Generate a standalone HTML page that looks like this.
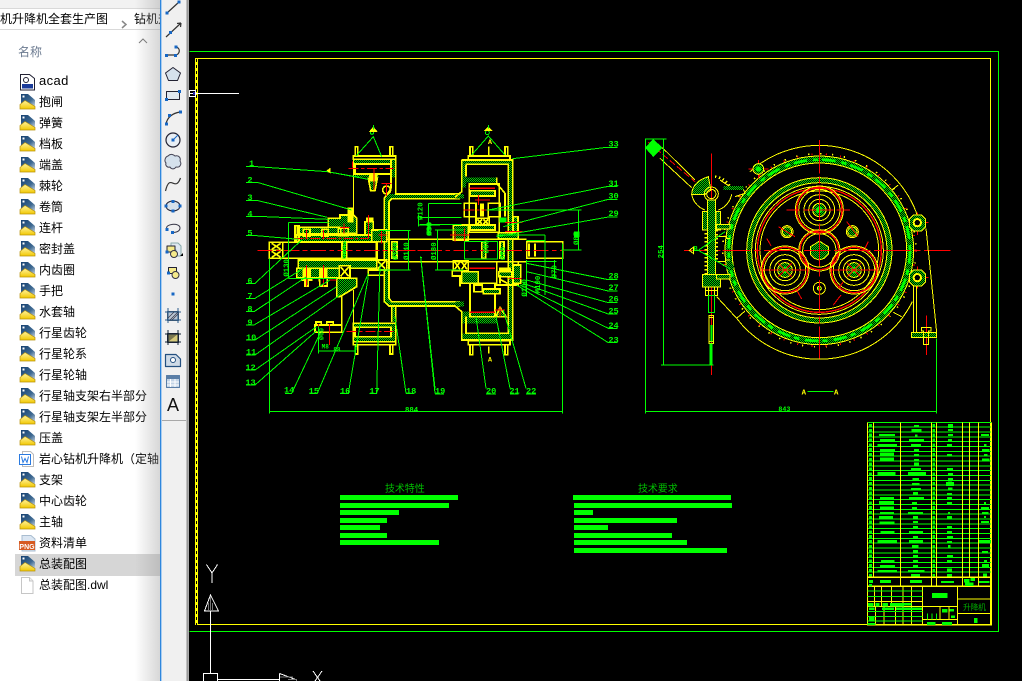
<!DOCTYPE html>
<html><head><meta charset="utf-8">
<style>
html,body{margin:0;padding:0;background:#000}
#w{position:relative;width:1022px;height:681px;overflow:hidden;background:#000;font-family:"Liberation Sans","Noto Sans CJK SC",sans-serif}
#ex{position:absolute;left:0;top:0;width:160px;height:681px;background:#fff;overflow:hidden}
.r{position:absolute;left:39px;font-size:12px;line-height:16px;color:#000;white-space:nowrap}
#sel{position:absolute;left:15px;top:554px;width:145px;height:22px;background:#d6d6d6}
#sh{position:absolute;left:135px;top:0;width:25px;height:681px;background:linear-gradient(90deg,rgba(160,160,160,0),rgba(150,150,150,.38))}
#tb{position:absolute;left:160px;top:0;width:26px;height:681px;background:#f0f0f0;border-left:1px solid #2f86dc;box-shadow:inset 1px 0 0 #a9cdf0;box-sizing:border-box}
#bar{position:absolute;left:186px;top:0;width:3px;height:681px;background:linear-gradient(90deg,#d8d8d8,#8f8f8f 50%,#b8b8b8)}
svg{position:absolute;left:0;top:0}
.y{fill:none;stroke:#ff0;stroke-width:3}
.g{fill:none;stroke:#0f0;stroke-width:3}
.r2{fill:none;stroke:#f00;stroke-width:3}
.h{fill:url(#h);stroke:#ff0;stroke-width:3}
.hg{fill:url(#h);stroke:none}
.t .y,.t .h{stroke-width:5}
.t .y .h{stroke-width:5}
text{font-family:"Liberation Mono",monospace;fill:#0f0;font-weight:bold}
</style></head><body><div id="w">
<div id="ex">
<div style="position:absolute;left:0;top:0;width:160px;height:8px;background:#f2f2f2;border-bottom:1px solid #d9d9d9"></div>
<div style="position:absolute;left:0;top:29px;width:160px;height:1px;background:#d9d9d9"></div>
<div style="position:absolute;left:0;top:11px;font-size:12px;line-height:16px;color:#000;white-space:nowrap">机升降机全套生产图</div>
<div style="position:absolute;left:134px;top:11px;font-size:12px;line-height:16px;color:#000;white-space:nowrap">钻机升</div>
<div style="position:absolute;left:18px;top:44px;font-size:12px;line-height:16px;color:#6b7a90">名称</div>
<div id="sel"></div>
<div class="r" style="top:73px;font-size:13px;letter-spacing:.4px">acad</div>
<div class="r" style="top:94px">抱闸</div>
<div class="r" style="top:115px">弹簧</div>
<div class="r" style="top:136px">档板</div>
<div class="r" style="top:157px">端盖</div>
<div class="r" style="top:178px">棘轮</div>
<div class="r" style="top:199px">卷筒</div>
<div class="r" style="top:220px">连杆</div>
<div class="r" style="top:241px">密封盖</div>
<div class="r" style="top:262px">内齿圈</div>
<div class="r" style="top:283px">手把</div>
<div class="r" style="top:304px">水套轴</div>
<div class="r" style="top:325px">行星齿轮</div>
<div class="r" style="top:346px">行星轮系</div>
<div class="r" style="top:367px">行星轮轴</div>
<div class="r" style="top:388px">行星轴支架右半部分</div>
<div class="r" style="top:409px">行星轴支架左半部分</div>
<div class="r" style="top:430px">压盖</div>
<div class="r" style="top:451px">岩心钻机升降机（定轴</div>
<div class="r" style="top:472px">支架</div>
<div class="r" style="top:493px">中心齿轮</div>
<div class="r" style="top:514px">主轴</div>
<div class="r" style="top:535px">资料清单</div>
<div class="r" style="top:556px">总装配图</div>
<div class="r" style="top:577px">总装配图.dwl</div>
<svg width="160" height="681">
<defs>
<linearGradient id="dg" x1="0" y1="0" x2="1" y2="1"><stop offset="0" stop-color="#143f70"/><stop offset=".6" stop-color="#3f6a92"/><stop offset="1" stop-color="#c9d6e2"/></linearGradient>
<linearGradient id="yg" x1="0" y1="0" x2="0" y2="1"><stop offset="0" stop-color="#fff3a0"/><stop offset="1" stop-color="#f2c800"/></linearGradient>
<symbol id="f" viewBox="0 0 16 16" overflow="visible">
<path d="M1 0H8L15 6V12.500L5 6.500L1 9.500Z" fill="url(#dg)"/>
<path d="M0 15V10.500L5 6.500L15 12.500V15Z" fill="url(#yg)" stroke="#b8930c" stroke-width=".7"/>
<rect x="2.500" y="1.500" width="2" height="2" fill="#fff"/>
</symbol>
</defs>
<path d="M122 21l4 3.500l-4 3.500" fill="none" stroke="#888" stroke-width="1.500"/>
<path d="M139 43l4-4l4 4" fill="none" stroke="#777" stroke-width="1"/>
<path d="M20.500 74.500h9l5 4v11.500h-14z" fill="#fff" stroke="#223"/>
<circle cx="26" cy="80" r="2.500" fill="none" stroke="#223"/>
<rect x="22" y="84" width="11" height="4.500" fill="#1c3c9a"/>
<use href="#f" x="20" y="94" width="16" height="16"/><use href="#f" x="20" y="115" width="16" height="16"/><use href="#f" x="20" y="136" width="16" height="16"/><use href="#f" x="20" y="157" width="16" height="16"/><use href="#f" x="20" y="178" width="16" height="16"/><use href="#f" x="20" y="199" width="16" height="16"/><use href="#f" x="20" y="220" width="16" height="16"/><use href="#f" x="20" y="241" width="16" height="16"/><use href="#f" x="20" y="262" width="16" height="16"/><use href="#f" x="20" y="283" width="16" height="16"/><use href="#f" x="20" y="304" width="16" height="16"/><use href="#f" x="20" y="325" width="16" height="16"/><use href="#f" x="20" y="346" width="16" height="16"/><use href="#f" x="20" y="367" width="16" height="16"/><use href="#f" x="20" y="388" width="16" height="16"/><use href="#f" x="20" y="409" width="16" height="16"/><use href="#f" x="20" y="430" width="16" height="16"/>
<path d="M22.500 451.500h8l3 3v12h-11z" fill="#fff" stroke="#bbb"/>
<rect x="19.500" y="454.500" width="11" height="10" fill="#fff" stroke="#2a7ae0"/>
<path d="M21.500 456.500l1.500 6l2-4l2 4l1.500-6" fill="none" stroke="#2a7ae0"/>
<use href="#f" x="20" y="472" width="16" height="16"/><use href="#f" x="20" y="493" width="16" height="16"/><use href="#f" x="20" y="514" width="16" height="16"/>
<path d="M22 535.500h9l4 3.500v12h-13z" fill="#dbe6f2" stroke="#a9bdd0"/>
<rect x="19" y="541" width="16" height="9" fill="#d65a22"/>
<text x="27" y="549" text-anchor="middle" style="font:bold 7px 'Liberation Sans',sans-serif;fill:#fff">PNG</text>
<use href="#f" x="20" y="556" width="16" height="16"/>
<path d="M21.500 577.500h8l3.500 3.500v12.500h-11.500z" fill="#fff" stroke="#c6c6c6"/>
<path d="M29.500 577.500v3.500h3.500" fill="#eee" stroke="#c6c6c6"/>
</svg>
<div id="sh"></div>
</div>
<div id="tb"></div>
<div style="position:absolute;left:162px;top:420px;width:24px;height:1px;background:#a8a8a8"></div>
<div id="bar"></div>

<svg width="1022" height="681" style="pointer-events:none">
<g stroke-linejoin="round">
<g fill="none" stroke="#333" stroke-width="1.200">
<path d="M167 13L179 2"/>
<path d="M166 37L181 23M181 23l-4 .5M181 23l-.5 4"/>
<path d="M166 55H175C180 55 181 48 176 47"/>
<path d="M166 124Q168 114 180 112"/>
<path d="M165.500 191C170 172 175 193 180.500 178"/>
</g>
<g fill="#1767c4">
<rect x="165.500" y="11.500" width="3" height="3"/><rect x="177.500" y="0.500" width="3" height="3"/>
<rect x="169" y="31" width="3" height="3"/>
<rect x="165" y="54" width="3" height="3"/><rect x="174" y="54" width="3" height="3"/><rect x="174.500" y="45.500" width="3" height="3"/>
<rect x="165" y="122.500" width="3" height="3"/><rect x="168" y="114" width="3" height="3"/><rect x="179" y="110.500" width="3" height="3"/>
</g>
<path d="M173 67.500L180.500 73L177.500 80.500H168.500L165.500 73Z" fill="#d5e1ec" stroke="#223"/>
<rect x="166.500" y="91.500" width="13" height="8" fill="#dfe8f1" stroke="#223"/>
<rect x="165" y="98" width="3" height="3" fill="#1767c4"/><rect x="178" y="90" width="3" height="3" fill="#1767c4"/>
<circle cx="173" cy="140" r="7" fill="#e8eef4" stroke="#223" stroke-width="1.200"/>
<path d="M173 140L178 135" stroke="#1767c4"/><rect x="171.500" y="138.500" width="3" height="3" fill="#1767c4"/>
<path d="M168 156c3-3 6-1 7 0c4-1 6 2 5 5c2 3 0 7-4 6c-2 3-5 2-6 0c-3 1-5-2-4-4c-2-2-1-6 2-7z" fill="#d5e1ec" stroke="#445"/>
<ellipse cx="173" cy="206" rx="7" ry="5" fill="#d5e1ec" stroke="#223"/>
<g fill="#1767c4"><rect x="164.500" y="204.500" width="3" height="3"/><rect x="178.500" y="204.500" width="3" height="3"/><rect x="171.500" y="200" width="3" height="3"/><rect x="171.500" y="209.500" width="3" height="3"/></g>
<path d="M167 229C164 224 180 222 180 228C180 232 174 233 172 232" fill="none" stroke="#334"/>
<rect x="165.500" y="228" width="3" height="3" fill="#1767c4"/><rect x="171" y="231" width="3" height="3" fill="#1767c4"/>
<path d="M171 243h7l3 3v10h-5v-6h-5z" fill="#dfe8f1" stroke="#8aa"/>
<rect x="167" y="246" width="8" height="6" fill="#f5ea8a" stroke="#223"/>
<circle cx="174" cy="254" r="3.500" fill="#f5ea8a" stroke="#334"/>
<rect x="165.500" y="250.500" width="3" height="3" fill="#1767c4"/>
<path d="M180 256h3v-3z" fill="#000"/>
<rect x="168.500" y="267.500" width="8" height="6" fill="#f5ea8a" stroke="#223"/>
<circle cx="175.500" cy="275" r="3.500" fill="#f5ea8a" stroke="#334"/>
<rect x="167" y="271.500" width="3" height="3" fill="#1767c4"/>
<rect x="171.500" y="292.500" width="3" height="3" fill="#1767c4"/>
<rect x="167.500" y="311.500" width="11" height="9" fill="#b9c6d3" stroke="#456"/>
<path d="M165 312H181M165 320H181M168 308V323M178 308V323" stroke="#2b5c8c" fill="none"/>
<path d="M170 320l8-8M172 320l6-6M168 318l6-6" stroke="#334" stroke-width=".7"/>
<rect x="167.500" y="333.500" width="11" height="9" fill="#7a7750" stroke="#223"/>
<path d="M168 342l10-8v8z" fill="#d6c97a"/>
<path d="M165 334H181M165 342H181M168 330V345M178 330V345" stroke="#123" fill="none"/>
<path d="M165.500 354.500H176L180.500 359V366.500H165.500Z" fill="#cfdbe7" stroke="#245080" stroke-width="1.200"/>
<circle cx="173" cy="360" r="2.500" fill="#fff" stroke="#245080"/>
<rect x="166.500" y="375.500" width="13" height="12" fill="#c2d3e6" stroke="#5a7ea6"/>
<rect x="167" y="376" width="12" height="3" fill="#5a7ea6"/>
<path d="M170.500 379V387M175 379V387M167 382H179M167 385H179" stroke="#fff" fill="none"/>
<text x="173" y="411" text-anchor="middle" style="font:18px 'Liberation Sans',sans-serif;fill:#111">A</text>
</g>
</svg>

<svg width="1022" height="681" shape-rendering="crispEdges" style="left:0;top:0">
<defs>
<pattern id="h" patternUnits="userSpaceOnUse" width="6" height="6"><rect width="6" height="6" fill="#000"/><rect width="3" height="3" fill="#0d0"/><rect x="3" y="3" width="3" height="3" fill="#0d0"/></pattern>
</defs>
<!-- frames -->
<path d="M189.500 51.500H998.500V631.500H189.500" fill="none" stroke="#0f0"/>
<rect x="195.500" y="58.500" width="795" height="566" fill="none" stroke="#ff0" stroke-width="1.300"/>
<path d="M197 59V625" stroke="#ff0" stroke-width="2" fill="none"/>
<path d="M196.500 59V625" stroke="#000" stroke-width="1" stroke-dasharray="3 3" fill="none"/>
<!-- crosshair -->
<path d="M195 93.500H239" stroke="#fff" fill="none"/>
<rect x="189.500" y="90.500" width="6" height="6" fill="none" stroke="#fff"/>
<path d="M189 93.500H195" stroke="#fff"/>
<rect x="193" y="92" width="2" height="3" fill="#22a"/>
<!-- UCS -->
<g fill="none" stroke="#fff">
<path d="M206.500 564.500L212 573L217.500 564.500M212 573V583"/>
<path d="M210.500 611V673"/>
<path d="M204.500 611H218.500L210.500 595Z"/>
<path d="M210.500 597V610M208.500 603V610M212.500 603V610" stroke="#777"/>
<rect x="203.500" y="673.500" width="14" height="9"/>
<path d="M218 679.500H279"/>
<path d="M279.500 673.500V681M279.500 673.500L297 680"/>
<path d="M280 677H293M288 679.500H297" stroke="#777"/>
<path d="M313 671L317.500 677.500L322 671M317.500 677.500L313 684M317.500 677.500L322 684"/>
</g>

<!-- LEFT VIEW -->
<g class="t" transform="translate(240,120) scale(.33333)">
<g class="hg">
<rect class="hg" x="340" y="118" width="127" height="14"/><rect class="hg" x="453" y="118" width="14" height="54"/><rect class="hg" x="345" y="162" width="70" height="10"/>
<rect class="hg" x="340" y="610" width="127" height="12"/><rect class="hg" x="340" y="650" width="127" height="15"/><rect class="hg" x="453" y="610" width="14" height="50"/>
<rect class="hg" x="456" y="560" width="11" height="46"/>
<rect class="hg" x="433" y="232" width="14" height="312"/>
<path class="hg" d="M447 222H660V236H455L447 245ZM447 535L455 545H660V558H447Z"/>
<path class="hg" d="M433 235L447 222V245L433 245ZM433 545H447V558Z"/>
</g>
<g class="y">
<path d="M340 108H467V118H340ZM346 80H353V108H346ZM450 80H458V108H450Z"/>
<path d="M340 118H467V222H660M453 118V172M345 132H453V162H345Z"/>
<path d="M453 172V205L442 222L433 235V545L447 558H660M447 245L455 236H660M447 245V535L455 545H660"/>
<path d="M467 558V610M455 558V606"/>
<path d="M340 610H467V665H340ZM345 622H453V650H345ZM340 665H467V674H340ZM346 674H353V702H346ZM450 674H458V702H450Z"/>
<path d="M340 118V290M340 510V665" style="stroke-width:3"/>
<path class="h" d="M385 175L392 212H405L412 175Z"/>
<circle cx="440" cy="210" r="12"/>
<path d="M390 168h20v14h-20z" fill="#ff0"/>
<!-- shaft -->
<path d="M128 367H410M128 415H410"/>
<rect x="88" y="367" width="40" height="48"/>
<path d="M88 391H128M95 370L122 388M122 370L95 388M95 394L122 412M122 394L95 412"/>
<path d="M410 358H660M410 425H660"/>
<path d="M410 362V425" style="stroke-width:7"/>
<!-- upper assembly -->
<path class="h" d="M265 295H300V285H340L350 295V340H265Z"/>
<rect class="h" x="172" y="322" width="130" height="20"/>
<rect class="h" x="170" y="345" width="235" height="20"/>
<rect class="h" x="375" y="305" width="25" height="40"/>
<rect class="h" x="395" y="330" width="45" height="35"/>
<rect x="165" y="317" width="12" height="48"/>
<rect x="190" y="328" width="20" height="20"/><rect x="245" y="328" width="20" height="20"/><rect x="295" y="325" width="30" height="22"/>
<path d="M325 265H338V305H325ZM380 295H398V305H380Z" fill="#ff0"/>
<!-- lower assembly -->
<rect class="h" x="175" y="420" width="235" height="25"/>
<rect class="h" x="170" y="445" width="130" height="28"/>
<rect x="190" y="450" width="20" height="18" fill="#ff0"/><rect x="240" y="450" width="20" height="18" fill="#ff0"/>
<rect x="298" y="437" width="32" height="36" fill="#000"/>
<path d="M302 441L326 469M326 441L302 469"/>
<rect x="410" y="420" width="30" height="30" fill="#000"/>
<path d="M414 424L436 446M436 424L414 446"/>
<rect x="385" y="450" width="48" height="16"/>
<path class="h" d="M290 475H350V500L300 530H290Z"/>
<path d="M185 475H215V480H205V498H195V480H185ZM238 475H262V498H240Z"/>
<path d="M305 530V615H225V637H305V530"/>
<path d="M228 606h16v10h-16zM260 606h20v10h-20z"/>
<rect class="h" x="306" y="365" width="14" height="50"/>
<rect class="h" x="455" y="365" width="16" height="50"/>
</g>
<g class="r2">
<path d="M52 391H600" stroke-dasharray="46 10 14 10"/>
<path d="M325 145H460" stroke-dasharray="30 8 10 8"/>
<path d="M320 634H460" stroke-dasharray="30 8 10 8"/>
<path d="M160 355H385" stroke-dasharray="30 6 8 6"/>
<path d="M338 125V142M402 145V210M385 285V355M440 190V228M425 190H455M312 310V340M300 322H328M200 330V355M250 330V355M425 330V370M415 345H440M200 435V500M250 435V500M267 480H290M235 612V650M268 612V675"/>
</g>
<g class="g">
<path d="M18 140H50L262 155L358 172M262 155L385 178"/>
<path d="M18 188H55L335 270"/>
<path d="M18 241H50L262 292"/>
<path d="M18 290H75L265 298"/>
<path d="M18 347H50L175 358"/>
<path d="M18 490H45L185 360"/>
<path d="M18 535H45L190 445"/>
<path d="M18 575H42L200 470"/>
<path d="M18 615H42L270 480"/>
<path d="M18 660H45L290 500"/>
<path d="M18 705H45L300 525"/>
<path d="M18 750H45L230 620"/>
<path d="M18 795H45L230 632"/>
<path d="M135 820H155L240 640"/>
<path d="M208 820H232L385 460"/>
<path d="M300 820H325L385 470"/>
<path d="M388 820H410L420 430"/>
<path d="M498 820L465 590M498 820H522"/>
<path d="M585 820L542 412H546"/>
<path d="M88 415V880M88 875H620"/>
<path d="M145 307V475M145 307H265M145 475H290"/>
<path d="M415 332H512M415 450H512M505 332V450"/>
<path d="M535 285V320M565 250V320M570 250H600M535 315H600"/>
<path d="M235 620V700M235 693H345M345 675V700"/>
<path d="M348 108L400 50L425 110"/>
<circle cx="396" cy="38" r="5"/>
<path d="M262 152l8-6v12z" fill="#ff0" stroke="#ff0"/>
<path d="M390 34H410L400 22Z" fill="#ff0" stroke="#ff0"/>
<path d="M400 15V28"/>
<path d="M312 380V415M314 365V410" stroke-width="8" stroke-dasharray="5 3" style="stroke-width:8"/>
</g>
<g style="font-size:26px">
<text x="27" y="138">1</text><text x="22" y="187">2</text><text x="22" y="240">3</text><text x="22" y="289">4</text><text x="22" y="346">5</text>
<text x="22" y="490">6</text><text x="22" y="535">7</text><text x="22" y="574">8</text><text x="22" y="615">9</text>
<text x="18" y="660">10</text><text x="18" y="704">11</text><text x="16" y="750">12</text><text x="16" y="795">13</text>
<text x="132" y="817">14</text><text x="206" y="820">15</text><text x="300" y="820">16</text><text x="388" y="820">17</text><text x="498" y="820">18</text>
<text x="495" y="876" style="font-size:22px">884</text>
<text x="0" y="0" transform="translate(547,300) rotate(-90)" style="font-size:22px">Ø120</text>
<text x="0" y="0" transform="translate(575,348) rotate(-90)" style="font-size:22px">Ø90</text>
<text x="0" y="0" transform="translate(473,420) rotate(-90)" style="font-size:22px">Ø180</text>
<text x="0" y="0" transform="translate(505,420) rotate(-90)" style="font-size:22px">Ø140</text>
<text x="0" y="0" transform="translate(146,470) rotate(-90)" style="font-size:22px">Ø130</text>
<text x="0" y="0" transform="translate(250,660) rotate(-90)" style="font-size:20px">Ø60</text>
<text x="245" y="685" style="font-size:18px">M8</text><text x="280" y="695" style="font-size:18px">88</text>
</g>
</g>

<g class="t" transform="translate(420,120) scale(.33333)">
<g>
<rect class="hg" x="125" y="120" width="153" height="13"/><rect class="hg" x="265" y="120" width="13" height="540"/><rect class="hg" x="125" y="133" width="13" height="70"/>
<rect class="hg" x="125" y="172" width="105" height="16"/><rect class="hg" x="125" y="575" width="105" height="35"/>
<rect class="hg" x="125" y="640" width="153" height="20"/>
<rect class="hg" x="107" y="222" width="25" height="14"/><rect class="hg" x="107" y="545" width="25" height="14"/>
</g>
<g class="y">
<path d="M150 80H158V108H150ZM255 80H263V108H255ZM145 108H270V120H145Z"/>
<path d="M125 120H278V660H125V575L105 558M125 120V215L105 232M138 133H265V640H138V590"/>
<path d="M138 133V170"/>
<path d="M230 172V190L255 220V290"/>
<rect x="148" y="192" width="90" height="145"/>
<rect class="h" x="150" y="212" width="75" height="16"/>
<rect class="h" x="150" y="315" width="75" height="15"/>
<rect x="168" y="295" width="40" height="20"/>
<path d="M172 298L186 312M186 298L172 312M190 298L204 312M204 298L190 312"/>
<rect x="133" y="250" width="35" height="40"/><rect x="205" y="250" width="35" height="40"/><path d="M183 250V290M189 250V290"/>
<rect class="h" x="100" y="315" width="45" height="45"/>
<rect x="100" y="422" width="45" height="30" fill="#000"/>
<path d="M104 426L120 448M120 426L104 448M125 426L141 448M141 426L125 448"/>
<path d="M97 452V468H120V500"/>
<rect class="h" x="125" y="455" width="50" height="35"/>
<rect x="150" y="490" width="75" height="100"/>
<rect class="h" x="190" y="507" width="50" height="14"/>
<rect x="162" y="495" width="25" height="20"/>
<path d="M150 490V590" style="stroke-width:7"/>
<path d="M0 358H320M0 425H320"/>
<rect x="320" y="365" width="108" height="50"/>
<path d="M327 370V410M345 370V410M428 365V415" />
<rect class="h" x="185" y="365" width="12" height="50"/>
<rect class="h" x="240" y="365" width="12" height="50"/>
<rect class="h" x="280" y="290" width="14" height="50"/>
<rect class="h" x="235" y="338" width="60" height="18"/>
<rect x="230" y="425" width="65" height="70"/>
<rect class="h" x="236" y="455" width="40" height="15"/>
<rect x="240" y="445" width="30" height="10" fill="#ff0"/>
<rect class="h" x="280" y="435" width="22" height="55"/>
<path d="M240 478L262 490M240 465V490"/>
<path class="h" d="M228 590L240 562L258 590Z"/>
<path d="M145 662H270V674H145ZM150 674H158V704H150ZM255 674H263V704H255Z"/>
<path d="M206 80V105M206 680V700"/>
</g>
<rect x="238" y="292" width="22" height="16" fill="#0f0"/>
<rect x="462" y="335" width="16" height="16" fill="#0f0"/>
<g class="r2">
<path d="M148 205H225M148 445H225M148 577H225" style="stroke-width:5"/>
<path d="M130 270H240" stroke-dasharray="34 6 8 6"/>
<path d="M-60 391H430" stroke-dasharray="46 10 14 10"/>
<path d="M90 345H150M105 325V365M133 325V365M175 225V255M165 240H210"/>
<path d="M255 308H308M255 334H308M265 476H305M225 570H255M240 560V590"/>
</g>
<g class="g">
<rect x="133" y="365" width="100" height="52"/>
<path d="M592 82H560L278 116"/>
<path d="M592 200H560L205 270"/>
<path d="M592 238H565L250 320"/>
<path d="M592 291H565L230 350"/>
<path d="M592 478H560L320 430"/>
<path d="M592 513H565L320 455"/>
<path d="M592 548H565L320 480"/>
<path d="M592 582H565L310 490"/>
<path d="M592 625H565L300 495"/>
<path d="M592 668H565L290 495"/>
<path d="M45 805L2 410M45 822H72"/>
<path d="M198 805L168 590M198 822H228"/>
<path d="M270 805L228 590M270 822H295"/>
<path d="M318 805L250 570M318 822H348"/>
<path d="M-60 875H428M428 370V880"/>
<path d="M320 362H375M375 345V525M230 345H375M320 420V530"/>
<path d="M404 420V475M320 425H410"/>
<path d="M476 270V390M200 270H485M425 390H485"/>
<path d="M52 330V450M45 330H130M45 450H130"/>
<path d="M25 250V345M25 250H125M0 292H125M0 314H125"/>
<path d="M155 105L205 48L255 105"/>
<circle cx="202" cy="38" r="6"/>
<path d="M195 32H215L205 22Z" fill="#ff0" stroke="#ff0"/>
<path d="M205 15V26"/>
</g>
<g style="font-size:26px">
<text x="565" y="80">33</text><text x="565" y="198">31</text><text x="565" y="235">30</text><text x="565" y="288">29</text>
<text x="565" y="476">28</text><text x="565" y="510">27</text><text x="565" y="544">26</text><text x="565" y="580">25</text><text x="565" y="624">24</text><text x="565" y="668">23</text>
<text x="45" y="820">19</text><text x="198" y="820">20</text><text x="268" y="820">21</text><text x="318" y="820">22</text>
<text x="204" y="72" style="font-size:20px;fill:#ff0">A</text>
<text x="204" y="725" style="font-size:20px;fill:#ff0">A</text>
<text transform="translate(48,420) rotate(-90)" style="font-size:22px">Ø180</text>
<text transform="translate(205,400) rotate(-90)" style="font-size:22px">Ø60</text>
<text transform="translate(255,420) rotate(-90)" style="font-size:22px">Ø88</text>
<text transform="translate(360,520) rotate(-90)" style="font-size:22px">M100</text>
<text transform="translate(410,475) rotate(-90)" style="font-size:22px">Ø70</text>
<text transform="translate(320,530) rotate(-90)" style="font-size:22px">Ø100</text>
<text transform="translate(475,375) rotate(-90)" style="font-size:22px">Ø85</text>
<text transform="translate(34,345) rotate(-90)" style="font-size:22px">Ø90</text>
</g>
</g>

<!-- RIGHT VIEW -->
<g transform="translate(635,125) scale(.33333)">
<g fill="none">
<circle cx="553" cy="376" r="272" stroke="url(#h)" stroke-width="20"/>
<circle cx="553" cy="376" r="272" stroke="#0f0" stroke-width="8" stroke-dasharray="40 18 16 12"/>
<circle cx="553" cy="376" r="210" stroke="url(#h)" stroke-width="15"/>
<circle cx="553" cy="376" r="262" stroke="#ff0" stroke-width="3"/>
<circle cx="553" cy="376" r="283" stroke="#ff0" stroke-width="3"/>
<circle cx="553" cy="376" r="290" stroke="#ff0" stroke-width="5" stroke-dasharray="4 32"/>
<circle cx="553" cy="376" r="288" stroke="#f00" stroke-width="6" stroke-dasharray="3 40"/>
<circle cx="553" cy="376" r="218" stroke="#ff0" stroke-width="3"/>
<circle cx="553" cy="376" r="203" stroke="#ff0" stroke-width="3"/>
<circle cx="553" cy="376" r="192" stroke="#ff0" stroke-width="3"/>
<circle cx="553" cy="376" r="186" stroke="#f00" stroke-width="4"/>
<circle cx="553" cy="376" r="178" stroke="#ff0" stroke-width="3"/>
</g>
<path class="y" d="M345 140A312 312 0 0 1 850 280M245 515L305 580A312 312 0 0 0 832 530"/>
<path class="y" d="M790 180L770 195M305 580L330 558M775 562L800 575"/>
<!-- planets -->
<g fill="none">
<g stroke="#ff0" stroke-width="3">
<circle cx="553" cy="255" r="62"/><circle cx="553" cy="255" r="46"/><circle cx="553" cy="255" r="32"/>
<circle cx="450" cy="435" r="62"/><circle cx="450" cy="435" r="46"/><circle cx="450" cy="435" r="32"/>
<circle cx="657" cy="435" r="62"/><circle cx="657" cy="435" r="46"/><circle cx="657" cy="435" r="32"/>
<circle cx="553" cy="376" r="50"/>
<circle cx="553" cy="490" r="18"/><circle cx="553" cy="490" r="6"/>
<circle cx="456" cy="320" r="18"/><circle cx="652" cy="320" r="18"/>
</g>
<g stroke="#f00" stroke-width="4">
<circle cx="553" cy="255" r="68"/><circle cx="450" cy="435" r="68"/><circle cx="657" cy="435" r="68"/><circle cx="553" cy="376" r="58"/>
</g>
<g stroke="#ff0" stroke-width="3"><circle cx="553" cy="255" r="72"/><circle cx="450" cy="435" r="72"/><circle cx="657" cy="435" r="72"/><circle cx="553" cy="376" r="62"/></g>
</g>
<g fill="url(#h)" stroke="#ff0" stroke-width="3">
<circle cx="553" cy="255" r="20"/><circle cx="450" cy="435" r="22"/><circle cx="657" cy="435" r="22"/>
<path d="M553 348L568 358L580 365L580 388L568 400L553 405L538 400L526 388L526 365L538 358Z"/>
<circle cx="456" cy="320" r="14"/><circle cx="652" cy="320" r="14"/>
</g>
<g fill="#0f0"><circle cx="553" cy="255" r="10"/><circle cx="450" cy="435" r="10"/><circle cx="657" cy="435" r="10"/><circle cx="553" cy="490" r="4"/></g>
<!-- red centers -->
<g class="r2">
<path d="M553 45V700" stroke-dasharray="100 10 20 10"/>
<path d="M147 376H953" stroke-dasharray="80 10 20 10"/>
<path d="M455 255H650" stroke-dasharray="40 10"/>
<path d="M395 340L408 362M430 305L480 335M635 290L670 335M700 350L690 370M485 495L500 522M618 510L595 540M430 415L470 455M470 415L430 455M637 415L677 455M677 415L637 455M610 490L625 470M385 435H515M590 435H725"/>
<path d="M229 85V750"/>
<path d="M370 105V160M340 132H400M847 263V330M820 293H880M847 425V490M820 458H880M875 572V690"/>
<path d="M40 52L180 170" stroke-dasharray="20 8"/>
</g>
<!-- handle -->
<path d="M55 42L82 68L55 96L30 68Z" fill="#0f0"/>
<path d="M82 68L180 165M75 100L170 188" class="y"/>
<path class="h" d="M170 208Q172 170 220 155L228 195L210 208Z"/>
<path class="y" d="M170 208A62 62 0 0 0 210 255M250 255A62 62 0 0 0 290 208M255 165L285 185H322L330 205L300 215"/>
<path d="M240 155A62 62 0 0 1 285 185" fill="none" stroke="#ff0" stroke-width="8" stroke-dasharray="4 8"/>
<circle cx="229" cy="207" r="21" fill="none" stroke="#ff0" stroke-width="3"/><circle cx="229" cy="207" r="14" fill="none" stroke="#ff0" stroke-width="3"/>
<rect class="hg" x="265" y="183" width="60" height="12"/>
<!-- rack -->
<rect class="h" x="217" y="225" width="24" height="240"/>
<path d="M213 300V460M245 315V410" stroke="#ff0" stroke-width="8" stroke-dasharray="5 7" fill="none"/>
<rect class="h" x="203" y="260" width="14" height="55"/><rect class="h" x="243" y="260" width="14" height="55"/>
<rect class="h" x="203" y="448" width="54" height="38"/>
<rect class="h" x="245" y="298" width="40" height="14"/><rect class="h" x="245" y="448" width="40" height="14"/>
<path class="y" d="M245 335H275V340H285M245 410H272V405H285"/>
<path class="y" d="M211 486H247V512H211ZM220 486V512M238 486V512M211 497H247"/>
<rect x="220" y="512" width="18" height="50" fill="none" stroke="#0f0" stroke-width="3"/>
<path class="y" d="M222 572H236V655H222ZM222 578H236M222 650H236"/>
<path d="M227 600H232V650H227Z" fill="#0f0"/>
<path d="M228 655V720" stroke="#0f0" stroke-width="8"/>
<!-- bosses -->
<g fill="url(#h)" stroke="#ff0" stroke-width="3">
<circle cx="370" cy="132" r="16"/>
<path d="M835 270H860L872 282V305L860 318H835L823 305V282Z"/>
<path d="M835 435H860L872 447V470L860 483H835L823 470V447Z"/>
</g>
<circle cx="847" cy="293" r="11" fill="#000" stroke="#ff0" stroke-width="6"/>
<circle cx="847" cy="458" r="11" fill="#000" stroke="#ff0" stroke-width="6"/>
<circle cx="370" cy="132" r="8" fill="#0f0"/>
<path class="y" d="M873 310L905 622M835 480V622M845 483V622"/>
<rect class="h" x="829" y="622" width="76" height="15"/>
<path class="y" d="M860 608H888V618H880V658H866V618H860Z"/>
<circle cx="285" cy="425" r="12" fill="url(#h)"/>
<g class="g">
<path d="M32 42V860M32 860H905M30 42H95M86 42V720M78 720H236"/>
<path d="M905 640V866"/>
<path d="M172 376L190 376L270 320M190 376L285 432"/>
<path d="M517 800H595"/>
<path d="M32 855V866M905 855V866"/>
</g>
<path d="M163 376L176 366V386Z" fill="none" stroke="#ff0" stroke-width="3"/>
<text x="176" y="376" style="font-size:20px">B</text>
<text x="430" y="858" style="font-size:20px">843</text>
<text transform="translate(84,400) rotate(-90)" style="font-size:22px">254</text>
<text x="500" y="808" style="font-size:22px;fill:#ff0">A</text><text x="597" y="808" style="font-size:22px;fill:#ff0">A</text>
</g>

<!-- TECH TEXT -->
<g fill="#0f0">
<rect x="340" y="495" width="118" height="5"/><rect x="340" y="503" width="109" height="5"/><rect x="340" y="510" width="59" height="5"/><rect x="340" y="518" width="47" height="5"/><rect x="340" y="525" width="40" height="5"/><rect x="340" y="533" width="47" height="5"/><rect x="340" y="540" width="99" height="5"/>
<rect x="573" y="495" width="158" height="5"/><rect x="574" y="503" width="158" height="5"/><rect x="574" y="510" width="19" height="5"/><rect x="574" y="518" width="103" height="5"/><rect x="574" y="525" width="34" height="5"/><rect x="574" y="533" width="98" height="5"/><rect x="574" y="540" width="113" height="5"/><rect x="574" y="548" width="153" height="5"/>
</g>
</svg>
<div style="position:absolute;left:385px;top:481px;font:10px/13px 'Noto Sans CJK SC',sans-serif;color:#0b0;letter-spacing:-.1px">技术特性</div>
<div style="position:absolute;left:638px;top:481px;font:10px/13px 'Noto Sans CJK SC',sans-serif;color:#0b0;letter-spacing:-.1px">技术要求</div>

<svg width="1022" height="681" shape-rendering="crispEdges">
<g transform="translate(860,415) scale(.33333)">
<path class="g" d="M22 22h372M22 36.500h372M22 51h372M22 65.500h372M22 80h372M22 94.500h372M22 109h372M22 123.500h372M22 138h372M22 152.500h372M22 167h372M22 181.500h372M22 196h372M22 210.500h372M22 225h372M22 239.500h372M22 254h372M22 268.500h372M22 283h372M22 297.500h372M22 312h372M22 326.500h372M22 341h372M22 355.500h372M22 370h372M22 384.500h372M22 399h372M22 413.500h372M22 428h372M22 442.500h372M22 457h372M22 471.500h372"/>
<path d="M31 27V487" stroke="#0f0" stroke-width="9" stroke-dasharray="8 6.500" fill="none"/>
<path d="M221 27V487" stroke="#0f0" stroke-width="8" stroke-dasharray="8 6.500" fill="none"/>
<g fill="none" stroke="#0f0" stroke-width="7">
<path d="M57 60h48M60 75h45M53 90h58M60 105h45M62 351h42M60 250h42M60 278h42M60 295h42M58 323h45M62 352h42M63 438h40M60 453h45M53 468h58"/>
<path d="M162 33h15M165 62h8M147 75h45M153 90h30M162 105h15M162 120h15M162 135h15M153 162h30M157 192h20M156 207h22M153 222h30M147 250h45M156 264h15M156 280h15M144 295h45M159 307h15M159 321h15M159 337h15M147 352h42M159 366h15M159 409h15M159 424h15M159 438h15M159 453h15M144 468h50M153 481h27"/>
<path d="M264 45h15M264 60h15M264 75h12M261 90h15M261 120h15M261 162h18M264 178h15M264 192h15M264 221h14M261 237h15M261 250h15M261 264h15M264 295h6M261 337h15M261 351h15M261 366h18M261 381h15M261 423h18M261 438h15M261 481h15"/>
<path d="M363 60h24M372 90h8M366 105h22M372 120h10M366 134h22M372 265h6M363 280h24M366 295h20M372 306h6M363 321h24M366 411h18M372 438h9"/>
</g>
<g fill="none" stroke="#0f0" stroke-width="11">
<path d="M155 47h30M60 118h42M60 133h42M53 176h54M162 148h15M144 176h54M159 236h15M57 263h45M57 308h42M147 380h42M156 395h20M53 380h58M264 33h15M261 308h15M264 395h8M261 466h15M366 452h21M369 481h12"/>
</g>
<path d="M355 380h40M258 207h24M270 200v12" fill="none" stroke="#0f0" stroke-width="11"/>
<g class="y">
<path d="M22 22V630H394V22M40 22V487M122 22V514M214 22V514M229 22V514M307 22V514M328 22V487M355 22V514"/>
<path d="M22 487H394M22 514H394" style="stroke-width:4"/>
<path d="M43 514V574M64 514V574M94 514V574M129 514V574M155 514V574M46 574V630M72 574V630M106 574V630M129 574V630M155 574V630"/>
<path d="M22 559H187M22 574H187" />
<path d="M187 514V630M292 514V630M292 552H394M292 595H394M187 574H292M187 613H292M240 574V613M267 574V613"/>
</g>
<path class="g" d="M22 528H187M22 544H187M22 590H187M22 604H187M22 618H187"/>
<path class="g" d="M203 595V613M216 595V613M229 595V613"/>
<g fill="#0f0">
<rect x="60" y="495" width="33" height="9"/><rect x="150" y="495" width="36" height="9"/><rect x="243" y="498" width="39" height="6"/><rect x="312" y="492" width="16" height="10"/><rect x="331" y="489" width="14" height="9"/><rect x="315" y="503" width="25" height="10"/><rect x="357" y="498" width="31" height="6"/><rect x="27" y="495" width="12" height="9"/><rect x="27" y="507" width="9" height="7"/>
<rect x="216" y="534" width="46" height="15"/>
<rect x="24" y="564" width="16" height="10"/><rect x="46" y="564" width="12" height="10"/><rect x="68" y="564" width="16" height="10"/><rect x="90" y="564" width="42" height="10"/><rect x="132" y="564" width="22" height="8"/>
<rect x="27" y="578" width="16" height="7"/><rect x="66" y="578" width="36" height="7"/><rect x="108" y="578" width="78" height="7"/><rect x="27" y="606" width="16" height="14"/><rect x="22" y="624" width="24" height="6"/>
<rect x="246" y="582" width="16" height="10"/><rect x="268" y="582" width="14" height="7"/><rect x="273" y="602" width="12" height="7"/><rect x="201" y="621" width="26" height="9"/><rect x="246" y="621" width="30" height="9"/>
<rect x="342" y="609" width="10" height="15"/>
</g>
</g>
</svg>
<div style="position:absolute;left:963px;top:603px;font:8px/10px 'Noto Sans CJK SC',sans-serif;color:#0a0;letter-spacing:-.5px">升降机</div>
</div></body></html>
